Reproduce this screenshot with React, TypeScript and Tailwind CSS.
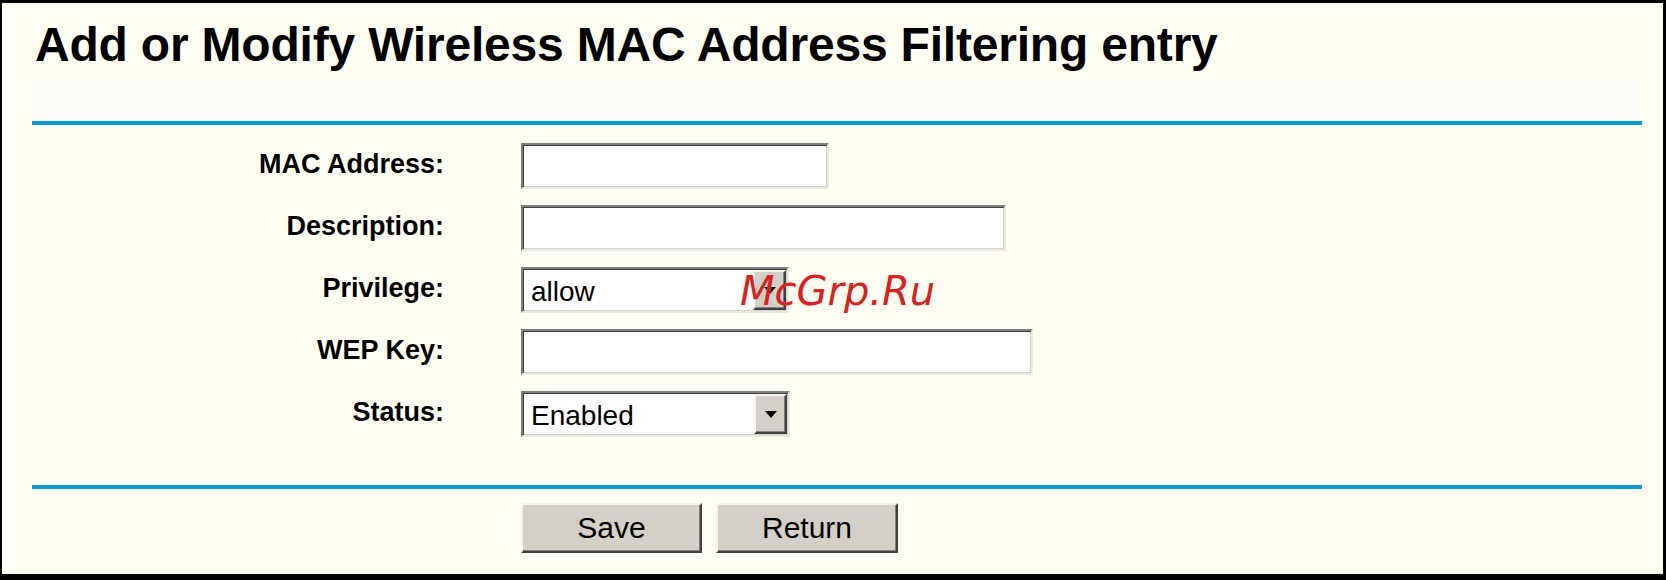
export default function App() {
    // form rows of the router page, widths taken from the picture
    const rows = [
        { label: "MAC Address:", type: "text", width: "w-[308px]", value: "" },
        { label: "Description:", type: "text", width: "w-[485px]", value: "" },
        { label: "Privilege:", type: "select", width: "w-[268px]", value: "allow" },
        { label: "WEP Key:", type: "text", width: "w-[512px]", value: "" },
        { label: "Status:", type: "select", width: "w-[269px]", value: "Enabled" }
    ]

    return (
    <>
        <div className="w-[1666px] h-[580px] bg-black pt-[3px] pl-[2px] pr-[3px] pb-[6px] font-['Liberation_Sans',Arial,sans-serif] text-black">
            <div className="relative h-full bg-[#fffef2]">

                <h1 className="pt-[18px] pl-[33px] text-[48px] leading-[48px] font-bold tracking-[-0.2px]">
                    Add or Modify Wireless MAC Address Filtering entry
                </h1>

                <div className="ml-[30px] mt-[11px] w-[1610px] h-[41px] bg-[#fbfcf5]"></div>
                <div className="ml-[30px] w-[1610px] h-[4px] bg-[#0e98cf] shadow-[0_0_1px_#7cc8e8]"></div>

                <div className="flex flex-col gap-[16px] mt-[18px]">
                    {rows.map((row, index) => (
                        <div key={index} className="flex items-center">
                            <div className="w-[442px] text-right text-[27px] font-bold leading-none -mt-[3px]">
                                {row.label}
                            </div>

                            {row.type === "text" ? (
                                <div className={`${row.width} ml-[77px] h-[46px] bg-white border-2 border-t-[#7f7f7f] border-l-[#7f7f7f] border-b-[#ebe9e3] border-r-[#ebe9e3] shadow-[inset_1px_1px_0_#404040,inset_-1px_-1px_0_#d4d0c8]`}></div>
                            ) : (
                                <div className={`${row.width} ml-[77px] h-[46px] flex bg-white border-2 border-t-[#7f7f7f] border-l-[#7f7f7f] border-b-[#ebe9e3] border-r-[#ebe9e3] shadow-[inset_1px_1px_0_#404040,inset_-1px_-1px_0_#d4d0c8]`}>
                                    <span className="flex-1 self-center pl-[8px] pt-[3px] text-[28px] leading-none">{row.value}</span>
                                    <div className="m-[1px] w-[33px] flex items-center justify-center bg-[#d4d0c8] border-2 border-t-[#f4f3ee] border-l-[#f4f3ee] border-b-[#404040] border-r-[#404040] shadow-[inset_-1px_-1px_0_#808080]">
                                        <div className="w-0 h-0 border-x-[6px] border-x-transparent border-t-[7px] border-t-black"></div>
                                    </div>
                                </div>
                            )}
                        </div>
                    ))}
                </div>

                <div className="ml-[30px] mt-[48px] w-[1610px] h-[4px] bg-[#0e98cf] shadow-[0_0_1px_#7cc8e8]"></div>

                <div className="flex gap-[14px] ml-[519px] mt-[14px]">
                    <button className="w-[181px] h-[50px] bg-[#d4d0c8] text-[30px] leading-none border-2 border-t-[#f4f3ee] border-l-[#f4f3ee] border-b-[#404040] border-r-[#404040] shadow-[inset_-1px_-1px_0_#808080]">
                        Save
                    </button>
                    <button className="w-[182px] h-[50px] bg-[#d4d0c8] text-[30px] leading-none border-2 border-t-[#f4f3ee] border-l-[#f4f3ee] border-b-[#404040] border-r-[#404040] shadow-[inset_-1px_-1px_0_#808080]">
                        Return
                    </button>
                </div>

                {/* watermark over the privilege select */}
                <div className="absolute left-[738px] top-[268px] font-['DejaVu_Sans',sans-serif] italic text-[40px] leading-none text-[#d92121]">
                    McGrp.Ru
                </div>
            </div>
        </div>
    </>
    );
}
